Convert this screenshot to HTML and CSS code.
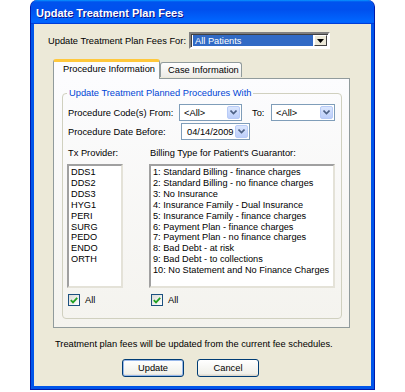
FILE: index.html
```html
<!DOCTYPE html>
<html lang="en">
<head>
    <meta charset="UTF-8">
    <title>Update Treatment Plan Fees</title>
    <link rel="stylesheet" href="styles.css">
</head>
<body>

    <div class="window">
        <div class="title-bar">
            <span class="title">Update Treatment Plan Fees</span>
        </div>

        <div class="window-body">
            <!-- Patient selection -->
            <div class="for-row">
                <span class="for-label">Update Treatment Plan Fees For:</span>
                <div class="combo classic">
                    <span class="combo-value selected">All Patients</span>
                    <span class="classic-btn">
                        <svg width="7" height="4" viewBox="0 0 7 4"><path d="M0 0h7L3.5 4z" fill="#000"/></svg>
                    </span>
                </div>
            </div>

            <!-- Tabs -->
            <div class="tabs">
                <div class="tab active">Procedure Information</div>
                <div class="tab">Case Information</div>
            </div>

            <div class="tab-page">
                <fieldset class="group">
                    <legend>Update Treatment Planned Procedures With</legend>

                    <div class="field-row">
                        <span class="code-label">Procedure Code(s) From:</span>
                        <div class="combo xp code-from">
                            <span class="combo-value">&lt;All&gt;</span>
                            <span class="xp-btn"><svg width="7" height="5" viewBox="0 0 7 5"><path d="M0.5 0.5l3 3 3-3" fill="none" stroke="#4d6185" stroke-width="1.6"/></svg></span>
                        </div>
                        <span class="to-label">To:</span>
                        <div class="combo xp code-to">
                            <span class="combo-value">&lt;All&gt;</span>
                            <span class="xp-btn"><svg width="7" height="5" viewBox="0 0 7 5"><path d="M0.5 0.5l3 3 3-3" fill="none" stroke="#4d6185" stroke-width="1.6"/></svg></span>
                        </div>
                    </div>

                    <div class="field-row date-row">
                        <span class="date-label">Procedure Date Before:</span>
                        <div class="combo xp date">
                            <span class="combo-value">04/14/2009</span>
                            <span class="xp-btn"><svg width="7" height="5" viewBox="0 0 7 5"><path d="M0.5 0.5l3 3 3-3" fill="none" stroke="#4d6185" stroke-width="1.6"/></svg></span>
                        </div>
                    </div>

                    <div class="lists">
                        <div class="list-col providers">
                            <span class="list-label">Tx Provider:</span>
                            <ul class="listbox">
                                <li>DDS1</li>
                                <li>DDS2</li>
                                <li>DDS3</li>
                                <li>HYG1</li>
                                <li>PERI</li>
                                <li>SURG</li>
                                <li>PEDO</li>
                                <li>ENDO</li>
                                <li>ORTH</li>
                            </ul>
                            <label class="check"><span class="box"><svg width="8" height="7" viewBox="0 0 8 7"><path d="M0.8 3.2l2.2 2.2 4.2-4.6" fill="none" stroke="#21a121" stroke-width="1.8"/></svg></span>All</label>
                        </div>
                        <div class="list-col billing">
                            <span class="list-label">Billing Type for Patient's Guarantor:</span>
                            <ul class="listbox">
                                <li>1: Standard Billing - finance charges</li>
                                <li>2: Standard Billing - no finance charges</li>
                                <li>3: No Insurance</li>
                                <li>4: Insurance Family - Dual Insurance</li>
                                <li>5: Insurance Family - finance charges</li>
                                <li>6: Payment Plan - finance charges</li>
                                <li>7: Payment Plan - no finance charges</li>
                                <li>8: Bad Debt - at risk</li>
                                <li>9: Bad Debt - to collections</li>
                                <li>10: No Statement and No Finance Charges</li>
                            </ul>
                            <label class="check"><span class="box"><svg width="8" height="7" viewBox="0 0 8 7"><path d="M0.8 3.2l2.2 2.2 4.2-4.6" fill="none" stroke="#21a121" stroke-width="1.8"/></svg></span>All</label>
                        </div>
                    </div>
                </fieldset>
            </div>

            <p class="note">Treatment plan fees will be updated from the current fee schedules.</p>

            <div class="buttons">
                <button class="btn default">Update</button>
                <button class="btn">Cancel</button>
            </div>
        </div>
    </div>

</body>
</html>
```

FILE: styles.css
```css
body {
    margin: 0;
    background-color: #fff;
    font-family: "Liberation Sans", Arial, sans-serif;
    font-size: 9.3px;
    color: #000;
    white-space: nowrap;
}

/* Window frame */
.window {
    width: 345px;
    height: 390px;
    margin-left: 30px;
    box-sizing: border-box;
    display: flex;
    flex-direction: column;
    background-color: #0055ea;
    border: 1px solid #0019a8;
    border-top: none;
    border-radius: 7px 7px 0 0;
}
.title-bar {
    height: 24px;
    flex-shrink: 0;
    display: flex;
    align-items: center;
    padding-left: 5px;
    border-radius: 7px 7px 0 0;
    background: linear-gradient(180deg, #0997ff, #0053ee 8%, #0050ee 40%, #06f 88%, #06f 93%, #005bff 95%, #003dd7 96%, #003dd7);
}
.title {
    color: #fff;
    font-weight: bold;
    font-size: 11px;
    text-shadow: 1px 1px #0f1089;
    padding-top: 1px;
}
.window-body {
    flex: 1;
    margin: 0 3px 3px;
    background-color: #ece9d8;
    padding-top: 8px;
}

/* Combo boxes */
.combo {
    display: flex;
    align-items: center;
    height: 17px;
    box-sizing: border-box;
    background-color: #fff;
}
.combo-value {
    flex: 1;
    padding-left: 3px;
    overflow: hidden;
}
.combo.classic {
    width: 141px;
    border: 2px solid;
    border-color: #808080 #fff #fff #808080;
    box-shadow: inset 1px 1px #404040;
    padding: 1px 1px 1px 2px;
}
.combo-value.selected {
    background-color: #316ac5;
    color: #fff;
    height: 100%;
    line-height: 12px;
    padding-left: 2px;
}
.classic-btn {
    width: 13px;
    height: 100%;
    box-sizing: border-box;
    display: flex;
    align-items: center;
    justify-content: center;
    background-color: #ece9d8;
    border: 1px solid;
    border-color: #fff #404040 #404040 #fff;
    margin-left: 1px;
}
.combo.xp {
    border: 1px solid #7f9db9;
    padding: 1px;
}
.xp-btn {
    width: 13px;
    height: 13px;
    flex-shrink: 0;
    box-sizing: border-box;
    display: flex;
    align-items: center;
    justify-content: center;
    background: linear-gradient(180deg, #dbe6fd, #bccefa);
    border: 1px solid #b8cbf7;
    border-radius: 2px;
}

.for-row {
    display: flex;
    align-items: center;
    padding-left: 14px;
}
.for-label {
    width: 141px;
}

/* Tabs */
.tabs {
    display: flex;
    align-items: flex-end;
    margin: 9px 0 0 19px;
    height: 20px;
    position: relative;
    z-index: 1;
}
.tab {
    height: 15px;
    box-sizing: border-box;
    line-height: 14px;
    border: 1px solid #919b9c;
    border-bottom: none;
    border-radius: 3px 3px 0 0;
    background: linear-gradient(180deg, #fff, #ecebe6);
    margin-bottom: 1px;
}
.tab.active {
    height: 20px;
    width: 107px;
    padding-left: 9px;
    background: #fcfcfe;
    border-top: 3px solid #ffc83c;
    margin-bottom: -1px;
    line-height: 15px;
}
.tab:not(.active) {
    width: 82px;
    padding-left: 7px;
}
.tab-page {
    width: 297px;
    height: 250px;
    margin-left: 19px;
    box-sizing: border-box;
    border: 1px solid #919b9c;
    background: linear-gradient(180deg, #fcfcfe, #f4f3ee);
    padding-top: 8px;
}

/* Group box */
.group {
    width: 280px;
    height: 232px;
    box-sizing: border-box;
    margin: 0 0 0 8px;
    padding: 0 0 0 5px;
    border: 1px solid #d0d0bf;
    border-radius: 4px;
}
.group legend {
    color: #0046d5;
    padding: 0 2px;
    margin-left: -1px;
    line-height: 12px;
}
.field-row {
    display: flex;
    align-items: center;
    margin-top: 5px;
}
.date-row {
    margin-top: 2px;
}
.code-label {
    width: 111px;
}
.code-from {
    width: 63px;
}
.to-label {
    width: 19px;
    margin-left: 10px;
}
.code-to {
    width: 64px;
}
.date-label {
    width: 113px;
}
.date {
    width: 69px;
}
.date .combo-value {
    padding-left: 4px;
}

/* Lists */
.lists {
    display: flex;
    margin-top: 7px;
}
.list-col {
    display: flex;
    flex-direction: column;
}
.providers {
    width: 82px;
    margin-left: -1px;
}
.billing {
    width: 186px;
}
.list-label {
    padding-left: 1px;
    line-height: 12px;
    margin-bottom: 5px;
}
.listbox {
    list-style: none;
    margin: 0;
    padding: 1px 0 0 2px;
    height: 124px;
    box-sizing: border-box;
    background-color: #fff;
    border: 2px solid;
    border-color: #a0a0a0 #e4e2d8 #e4e2d8 #a0a0a0;
    font-size: 9.2px;
    line-height: 10.9px;
    overflow: hidden;
}
.providers .listbox {
    width: 56px;
}
.check {
    display: flex;
    align-items: center;
    margin-top: 6px;
    padding-left: 1px;
}
.billing .check {
    padding-left: 2px;
}
.box {
    width: 12px;
    height: 12px;
    box-sizing: border-box;
    display: flex;
    align-items: center;
    justify-content: center;
    border: 1px solid #1c5180;
    background: linear-gradient(135deg, #dcdcd7, #fff);
    margin-right: 5px;
}

.note {
    margin: 10px 0 0 21px;
    line-height: 12px;
}

/* Buttons */
.buttons {
    display: flex;
    gap: 13px;
    margin: 9px 0 0 88px;
}
.btn {
    width: 62px;
    height: 18px;
    font: inherit;
    padding: 0;
    border: 1px solid #003c74;
    border-radius: 3px;
    background: linear-gradient(180deg, #fff, #f0f0ea 85%, #d6d0c5);
    color: #000;
}
.btn.default {
    box-shadow: inset 0 0 0 1px #98b8ea;
}
```
